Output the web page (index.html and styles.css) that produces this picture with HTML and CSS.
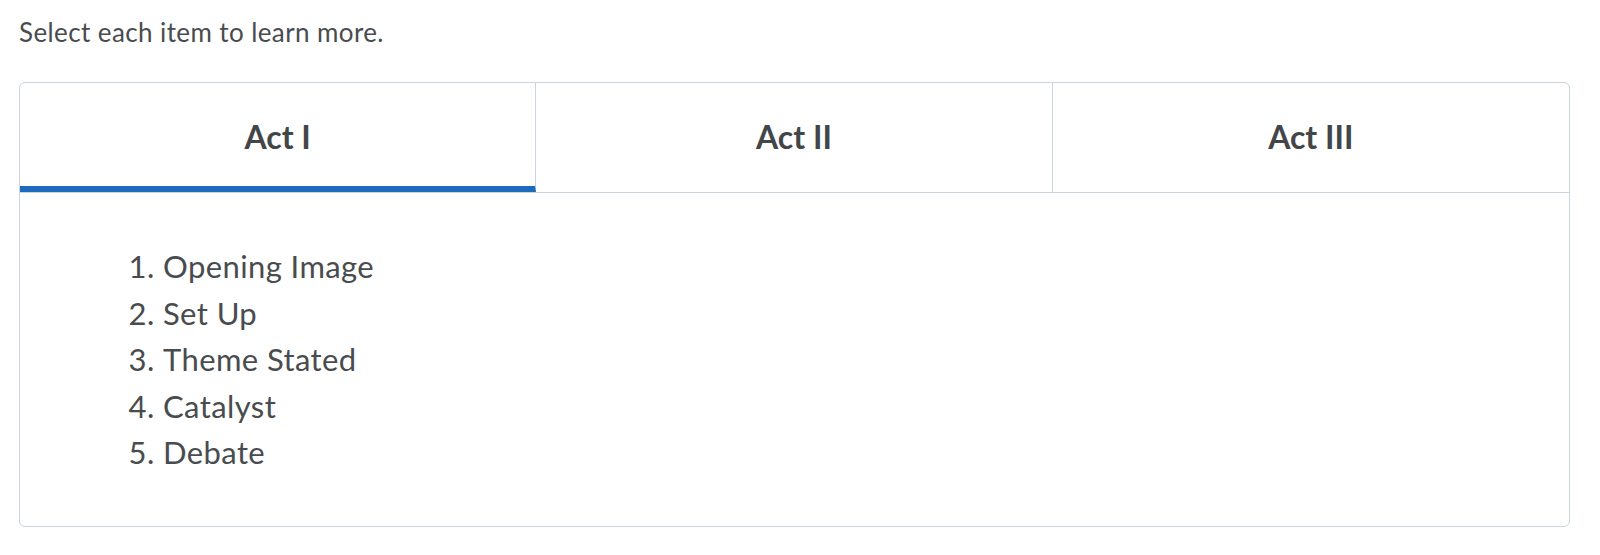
FILE: index.html
```html
<!DOCTYPE html>
<html lang="en">
<head>
<meta charset="utf-8">
<title>Acts</title>
<link rel="stylesheet" href="styles.css">
</head>
<body>
<div class="page">
  <p class="intro">Select each item to learn more.</p>
  <div class="tabs">
    <div class="tablist">
      <div class="tab active">Act I</div>
      <div class="tab">Act II</div>
      <div class="tab">Act III</div>
    </div>
    <div class="panel">
      <ol class="items">
        <li>Opening Image</li>
        <li>Set Up</li>
        <li>Theme Stated</li>
        <li>Catalyst</li>
        <li>Debate</li>
      </ol>
    </div>
  </div>
</div>
</body>
</html>
```
FILE: styles.css
```css
html, body {
  margin: 0;
  padding: 0;
  background: #ffffff;
}
.page {
  padding: 17px 30px 0 19px;
  font-family: Lato, "Open Sans", sans-serif;
  color: #494c4e;
}
.intro {
  margin: 0 0 35px 0;
  font-size: 26px;
  line-height: 30px;
  letter-spacing: 0.4px;
}
.tabs {
  border: 1px solid #cdd5dc;
  border-radius: 6px;
  overflow: hidden;
}
.tablist {
  display: grid;
  grid-template-columns: 1fr 1fr 1fr;
  border-bottom: 1px solid #cdd5dc;
}
.tab {
  height: 109px;
  display: flex;
  align-items: center;
  justify-content: center;
  font-weight: 700;
  font-size: 32px;
  color: #434649;
  border-right: 1px solid #cdd5dc;
  box-sizing: border-box;
  padding-top: 4px;
  padding-bottom: 6px;
}
.tab:last-child {
  border-right: none;
}
.tab.active {
  border-bottom: 6px solid #1e6bbe;
  padding-bottom: 0;
}
.panel {
  height: 333px;
  box-sizing: border-box;
  padding-top: 50px;
}
.items {
  margin: 0;
  padding-left: 143px;
  font-size: 31px;
  line-height: 46.5px;
  letter-spacing: 0.4px;
}
```
